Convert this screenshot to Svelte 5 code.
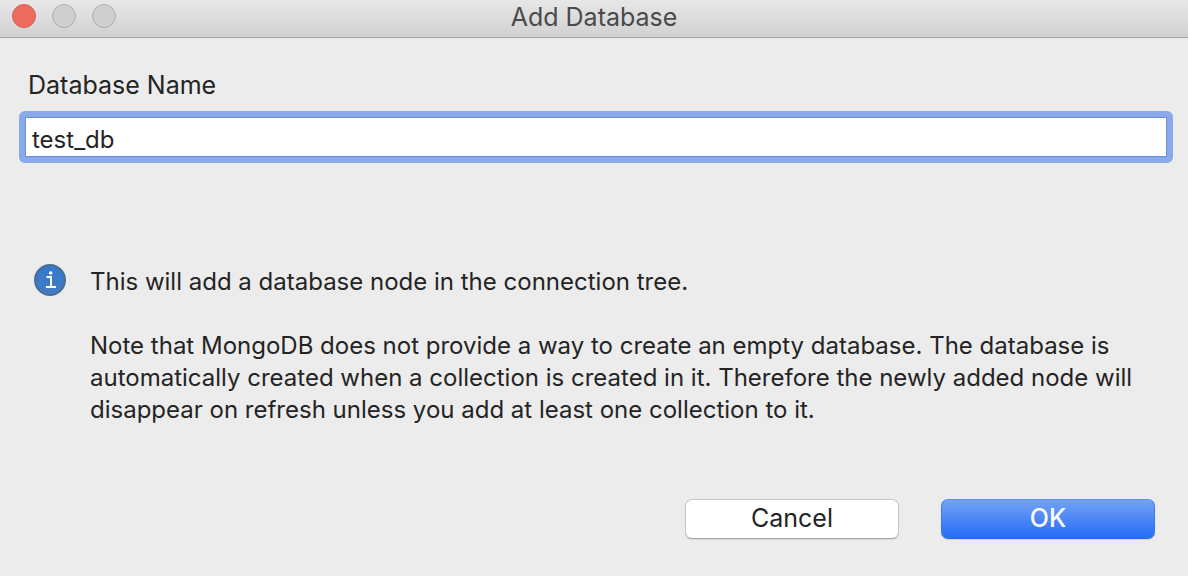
<script>
  let name = $state('test_db');
</script>

<div class="window">
  <header class="titlebar">
    <div class="lights">
      <button class="light close" aria-label="Close"></button>
      <button class="light" aria-label="Minimize" disabled></button>
      <button class="light" aria-label="Zoom" disabled></button>
    </div>
    <h1>Add Database</h1>
    <div></div>
  </header>
  <main>
    <label for="db-name">Database Name</label>
    <div class="ring">
      <input id="db-name" type="text" bind:value={name} />
    </div>
    <section class="info">
      <svg width="32" height="32" viewBox="0 0 32 32" aria-hidden="true">
        <defs>
          <linearGradient id="badge" x1="0" y1="0" x2="0" y2="1">
            <stop offset="0" stop-color="#3478cc" />
            <stop offset="1" stop-color="#427cc4" />
          </linearGradient>
        </defs>
        <circle cx="16" cy="16" r="15" fill="url(#badge)" stroke="#4b6c94" stroke-width="2" />
        <circle cx="16.7" cy="9" r="1.8" fill="#fff" />
        <path d="M12.5 13h4.5v10M12 23h10" fill="none" stroke="#fff" stroke-width="2" />
      </svg>
      <div class="copy">
        <p>This will add a database node in the connection tree.</p>
        <p>Note that MongoDB does not provide a way to create an empty database. The database is automatically created when a collection is created in it. Therefore the newly added node will disappear on refresh unless you add at least one collection to it.</p>
      </div>
    </section>
    <footer>
      <button class="action">Cancel</button>
      <button class="action primary">OK</button>
    </footer>
  </main>
</div>

<style>
  :global(body) { margin: 0; background: #ececec; }
  .window { font-family: Inter, "Liberation Sans", sans-serif; font-size: 24px; line-height: 32px; color: #242424; }
  .titlebar { display: grid; grid-template-columns: 1fr auto 1fr; align-items: center; height: 32px; padding: 0 12px 5px; background: linear-gradient(#e7e7e7, #d1d1d1); border-bottom: 1px solid #a6a6a6; }
  h1 { margin: 0; padding-top: 2px; font-size: 25px; line-height: 30px; font-weight: 400; color: #4a4a4a; }
  .lights { display: flex; gap: 16px; }
  .light { width: 24px; height: 24px; padding: 0; box-sizing: border-box; border: 1px solid #b0b0b0; border-radius: 50%; background: #cfcfcf; }
  .close { background: #ed6a5e; border-color: #d35f55; }
  main { display: flex; flex-direction: column; padding: 31px 15px 37px 19px; }
  label { padding-left: 9px; font-size: 25px; }
  .ring { display: flex; margin-top: 10px; padding: 6px; border-radius: 6px; background: #8aa9ea; }
  input { flex: 1; min-width: 0; height: 40px; box-sizing: border-box; border: 1px solid #6c8dd0; border-radius: 0; outline: none; padding: 4px 6px 0; background: #fff; font: inherit; color: inherit; }
  .info { display: flex; gap: 24px; padding: 101px 36px 0 15px; }
  .info svg { flex: none; }
  .copy { display: flex; flex-direction: column; gap: 32px; margin-top: 2px; min-width: 0; }
  p { margin: 0; }
  footer { display: flex; justify-content: flex-end; gap: 42px; margin-top: 73px; padding-right: 18px; }
  .action { width: 214px; height: 40px; border: 1px solid #c6c6c6; border-bottom-color: #a8a8a8; border-radius: 7px; background: #fff; box-shadow: 0 1px 1px #0000001a; font: inherit; font-size: 25px; color: #242424; padding: 0 0 2px; }
  .primary { background: linear-gradient(#75a3f6, #256af6) border-box; border-color: #5a91ee #3a78f0 #256af6; color: #fff; font-weight: 500; }
</style>
